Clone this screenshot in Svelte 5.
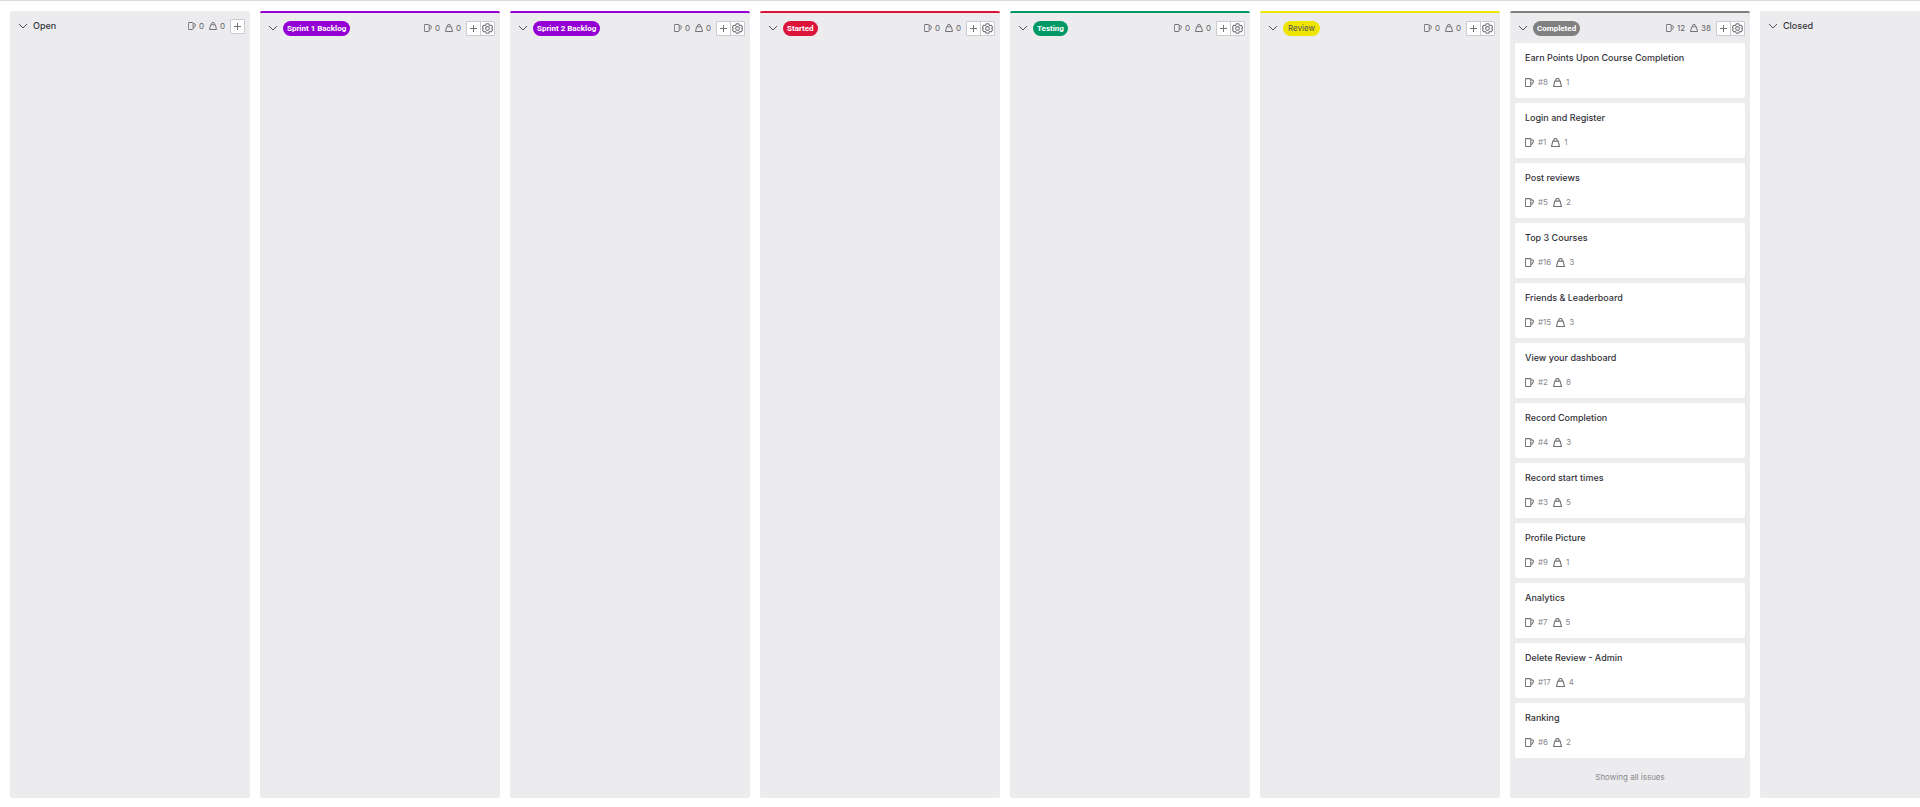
<script>
  const lists = [
    { name: 'Open', issues: 0, weight: 0, open: true },
    { name: 'Sprint 1 Backlog', color: '#9400d3', issues: 0, weight: 0, open: true },
    { name: 'Sprint 2 Backlog', color: '#9400d3', issues: 0, weight: 0, open: true },
    { name: 'Started', color: '#dc143c', issues: 0, weight: 0, open: true },
    { name: 'Testing', color: '#009966', issues: 0, weight: 0, open: true },
    { name: 'Review', color: '#eee600', dark: true, issues: 0, weight: 0, open: true },
    {
      name: 'Completed', color: '#808080', issues: 12, weight: 38, open: true,
      cards: [
        { title: 'Earn Points Upon Course Completion', id: 8, weight: 1 },
        { title: 'Login and Register', id: 1, weight: 1 },
        { title: 'Post reviews', id: 5, weight: 2 },
        { title: 'Top 3 Courses', id: 16, weight: 3 },
        { title: 'Friends & Leaderboard', id: 15, weight: 3 },
        { title: 'View your dashboard', id: 2, weight: 8 },
        { title: 'Record Completion', id: 4, weight: 3 },
        { title: 'Record start times', id: 3, weight: 5 },
        { title: 'Profile Picture', id: 9, weight: 1 },
        { title: 'Analytics', id: 7, weight: 5 },
        { title: 'Delete Review - Admin', id: 17, weight: 4 },
        { title: 'Ranking', id: 6, weight: 2 }
      ]
    },
    { name: 'Closed', open: false }
  ];
</script>

{#snippet issueIcon()}
  <svg class="icon" viewBox="0 0 16 16" aria-hidden="true">
    <path d="M2 1h7a1.300 1.300 0 0 1 1.300 1.300v11.400A1.300 1.300 0 0 1 9 15H2a1.300 1.300 0 0 1-1.300-1.300V2.300A1.300 1.300 0 0 1 2 1zM10.500 2.800l3.600 1.300c.7.300 1 .8.900 1.500-.3 2.200-1.500 4.500-3.400 6.200" />
  </svg>
{/snippet}

{#snippet weightIcon()}
  <svg class="icon" viewBox="0 0 16 16" aria-hidden="true">
    <path d="M3.300 5.500h9.400L15 15H1zM5 5.300V3.800a3 3 0 0 1 6 0v1.500" />
  </svg>
{/snippet}

<main class="board">
  {#each lists as list}
    <section class="list" class:labelled={list.color} style:border-top-color={list.color}>
      <header>
        <button class="toggle" aria-label="Collapse {list.name}">
          <svg viewBox="0 0 10 10" aria-hidden="true"><path d="M1 3l4 4 4-4" /></svg>
        </button>
        {#if list.color}
          <h2 class="badge" class:dark={list.dark} style:background-color={list.color}>{list.name}</h2>
        {:else}
          <h2>{list.name}</h2>
        {/if}
        {#if list.open}
          <div class="counts">
            <span>{@render issueIcon()}{list.issues}</span>
            <span>{@render weightIcon()}{list.weight}</span>
          </div>
          <div class="actions">
            <button aria-label="New issue in {list.name}">
              <svg class="plus" viewBox="0 0 9 9" aria-hidden="true"><path d="M4.500 1v7M1 4.500h7" /></svg>
            </button>
            {#if list.color}
              <button aria-label="Settings for {list.name}">
                <svg class="gear" viewBox="0 0 16 16" aria-hidden="true">
                  <path d="M6.300 1h3.400l.8 2 1.100.6 2.100-.3 1.700 2.900L14.100 8l1.300 1.800-1.700 2.900-2.100-.3-1.100.6-.8 2H6.300l-.8-2-1.100-.6-2.100.3-1.700-2.900L1.900 8 .6 6.200l1.700-2.900 2.100.3L5.500 3z" />
                  <circle cx="8" cy="8" r="2.700" />
                </svg>
              </button>
            {/if}
          </div>
        {/if}
      </header>
      {#if list.cards}
        <ul>
          {#each list.cards as card}
            <li>
              <a href="#issue-{card.id}">{card.title}</a>
              <div class="meta">
                <span>{@render issueIcon()}#{card.id}</span>
                <span>{@render weightIcon()}{card.weight}</span>
              </div>
            </li>
          {/each}
        </ul>
        <p>Showing all issues</p>
      {/if}
    </section>
  {/each}
</main>

<style>
  :global(body) {
    margin: 0;
    overflow: hidden;
    background: #fff;
  }
  .board {
    box-sizing: border-box;
    display: flex;
    gap: 10px;
    min-height: 100vh;
    padding: 10px 10px 9px;
    border-top: 1px solid #dcdcde;
    overflow: hidden;
    font-family: Inter, "Liberation Sans", sans-serif;
    font-size: 9px;
    line-height: 12px;
    color: #333238;
  }
  .list {
    box-sizing: border-box;
    flex: 0 0 240px;
    background: #ececef;
    border-radius: 2px;
  }
  .labelled {
    border-top: 2px solid;
  }
  header {
    box-sizing: border-box;
    display: flex;
    align-items: center;
    height: 30px;
    padding: 0 5px 0 8px;
  }
  button {
    display: flex;
    align-items: center;
    justify-content: center;
    box-sizing: border-box;
    padding: 0;
    border: 0;
    background: none;
  }
  svg {
    display: block;
    flex: none;
    fill: none;
    stroke: #737278;
  }
  .toggle {
    width: 10px;
    height: 10px;
    margin-right: 5px;
  }
  .toggle svg {
    width: 10px;
    height: 10px;
    stroke: #535158;
  }
  h2 {
    margin: 0;
    font-size: 9px;
    line-height: 12px;
    font-weight: 500;
    white-space: nowrap;
  }
  .badge {
    padding: 0 4px;
    border-radius: 8px;
    font-family: Roboto, "Liberation Sans", sans-serif;
    font-size: 8px;
    line-height: 15px;
    font-weight: 700;
    color: #fff;
  }
  .badge.dark {
    padding: 0 5px;
    font-family: inherit;
    font-weight: 400;
    color: #535158;
  }
  .counts {
    display: flex;
    gap: 5px;
    margin-left: auto;
    font-size: 8px;
    color: #626168;
  }
  .counts span {
    display: flex;
    align-items: center;
    gap: 3px;
  }
  .icon {
    width: 8px;
    height: 8px;
    stroke-width: 2;
  }
  .actions {
    display: flex;
    margin-left: 5px;
    background: #fff;
    border: 1px solid #ccccd0;
    border-radius: 1px;
  }
  .actions button {
    width: 13px;
    height: 13px;
  }
  .actions button + button {
    width: 14px;
    border-left: 1px solid #ccccd0;
  }
  .plus {
    width: 9px;
    height: 9px;
  }
  .gear {
    width: 11px;
    height: 11px;
    stroke-width: 1.600;
  }
  ul {
    display: flex;
    flex-direction: column;
    gap: 5px;
    margin: 0;
    padding: 0 5px;
    list-style: none;
  }
  li {
    box-sizing: border-box;
    min-height: 55px;
    padding: 9px 10px;
    border-radius: 2px;
    background: #fff;
  }
  a {
    display: block;
    font-weight: 500;
    color: #333238;
    text-decoration: none;
  }
  .meta {
    display: flex;
    gap: 5px;
    margin-top: 12px;
    font-size: 8px;
    color: #89888d;
  }
  .meta span {
    display: flex;
    align-items: center;
    gap: 4px;
  }
  .meta .icon {
    width: 9px;
    height: 9px;
  }
  p {
    margin: 13px 0;
    font-size: 8px;
    text-align: center;
    color: #89888d;
  }
</style>
